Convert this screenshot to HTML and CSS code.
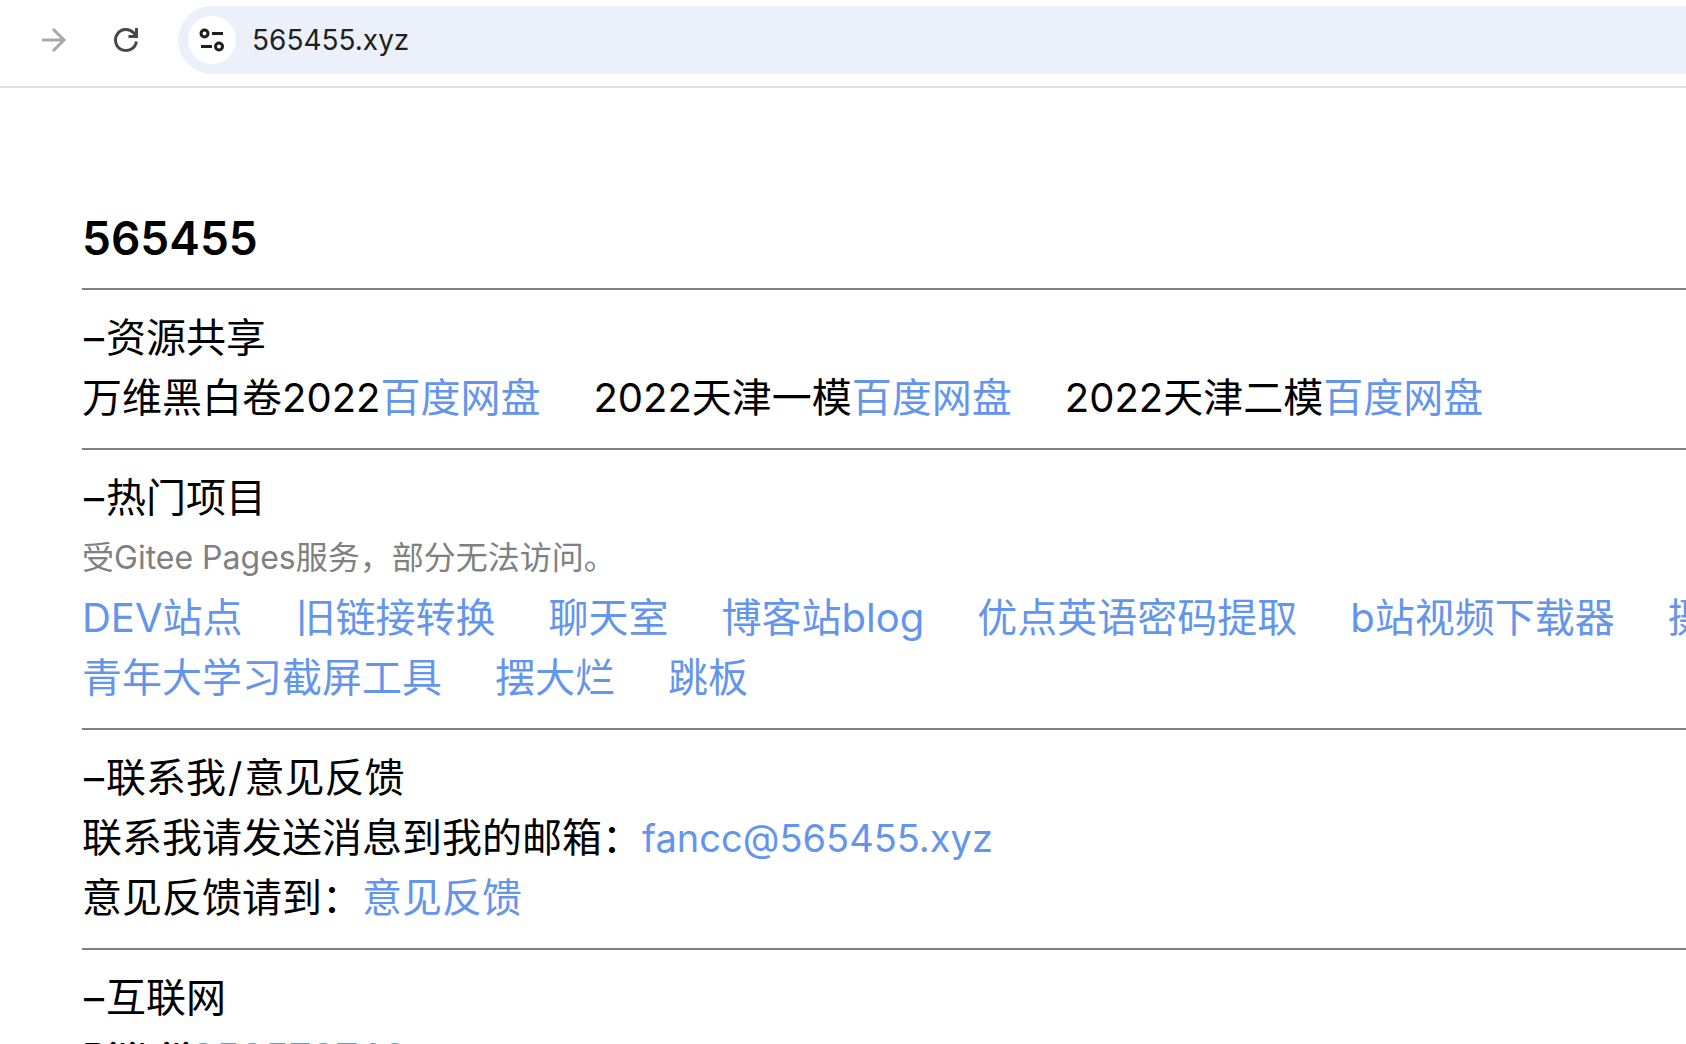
FILE: index.html
```html
<!DOCTYPE html>
<html lang="zh-CN">
<head>
    <meta charset="UTF-8">
    <meta name="viewport" content="width=device-width, initial-scale=1.0">
    <link rel="stylesheet" href="styles.css">
    <title>565455</title>
</head>
<body>
    <!-- toolbar -->
    <header class="toolbar">
      <button class="tool-btn forward" type="button" aria-label="前进">
        <svg width="32" height="32" viewBox="0 0 32 32" fill="none" stroke="#a9a9a9" stroke-width="3">
          <path d="M4 16H26M15 5L26 16L15 27"/>
        </svg>
      </button>
      <button class="tool-btn reload" type="button" aria-label="刷新">
        <svg width="32" height="32" viewBox="0 0 32 32" fill="none" stroke="#474747" stroke-width="3">
          <path d="M26.4 17.5A10.5 10.5 0 1 1 23.4 8.6L26.5 12"/>
          <path d="M18.5 12.5H26.5V4"/>
        </svg>
      </button>
      <div class="address-bar">
        <button class="site-info" type="button" aria-label="网站信息">
          <svg width="32" height="32" viewBox="0 0 32 32" fill="none" stroke="#1f1f1f" stroke-width="3">
            <circle cx="8.5" cy="9.5" r="3.5"/>
            <path d="M16 9.5H27M5 22.5H16"/>
            <circle cx="23" cy="22.5" r="3.5"/>
          </svg>
        </button>
        <input class="address" type="text" value="565455.xyz" aria-label="地址">
      </div>
    </header>

    <main class="content">
      <h1>565455</h1>
      <hr>
      <section>
        <h2><span class="mark">–</span>资源共享</h2>
        <div class="row">
          <span>万维黑白卷2022<a href="#">百度网盘</a></span>
          <span>2022天津一模<a href="#">百度网盘</a></span>
          <span>2022天津二模<a href="#">百度网盘</a></span>
        </div>
      </section>
      <hr>
      <section>
        <h2><span class="mark">–</span>热门项目</h2>
        <p class="note">受Gitee Pages服务，部分无法访问。</p>
        <div class="row">
          <a href="#">DEV站点</a>
          <a href="#">旧链接转换</a>
          <a href="#">聊天室</a>
          <a href="#">博客站blog</a>
          <a href="#">优点英语密码提取</a>
          <a href="#">b站视频下载器</a>
          <a href="#">摄</a>
        </div>
        <div class="row">
          <a href="#">青年大学习截屏工具</a>
          <a href="#">摆大烂</a>
          <a href="#">跳板</a>
        </div>
      </section>
      <hr>
      <section>
        <h2><span class="mark">–</span>联系我<span class="mark">/</span>意见反馈</h2>
        <p>联系我请发送消息到我的邮箱：<a class="mail" href="mailto:fancc@565455.xyz">fancc@565455.xyz</a></p>
        <p>意见反馈请到：<a href="#">意见反馈</a></p>
      </section>
      <hr>
      <section>
        <h2><span class="mark">–</span>互联网</h2>
        <p>Bilibili<a href="#">353573746</a></p>
      </section>
    </main>
</body>
</html>
```
FILE: styles.css
```css
* {
    box-sizing: border-box;
}

body {
    margin: 0;
    height: 100vh;
    overflow: hidden;
    background: #fff;
    color: #000;
    font-family: Inter, "Noto Sans CJK SC", sans-serif;
    font-size: 40px;
    line-height: 60px;
}

.toolbar {
    display: flex;
    align-items: center;
    height: 88px;
    padding: 6px 0 12px 38px;
    border-bottom: 2px solid #e1e1e1;
}

.tool-btn, .site-info {
    display: flex;
    align-items: center;
    justify-content: center;
    padding: 0;
    border: none;
    background: none;
    cursor: pointer;
}

.forward {
    margin-right: 40px;
}

.reload {
    margin-right: 36px;
}

.address-bar {
    display: flex;
    flex: 1;
    align-items: center;
    height: 68px;
    padding-left: 10px;
    border-radius: 34px 0 0 34px;
    background: #ecf0fa;
}

.site-info {
    width: 48px;
    height: 48px;
    border-radius: 50%;
    background: #fff;
}

.address {
    flex: 1;
    margin-left: 16px;
    padding: 0;
    border: none;
    outline: none;
    background: none;
    color: #1f1f1f;
    font-family: Inter, sans-serif;
    font-size: 28px;
}

.content {
    padding: 120px 0 0 82px;
}

h1, h2, p {
    margin: 0;
}

h1 {
    font-size: 46px;
    font-weight: 600;
    line-height: 60px;
}

h2 {
    font-size: 40px;
    font-weight: 400;
}

/* dash and slash in the section titles */
.mark {
    padding: 0 2px;
}

hr {
    height: 2px;
    margin: 20px 0 18px;
    border: none;
    background: #808080;
}

.row {
    display: flex;
    gap: 53px;
    white-space: nowrap;
}

.note {
    color: #808080;
    font-size: 32px;
}

.mail {
    font-size: 38px;
}

a {
    color: cornflowerblue;
    text-decoration: none;
}
```
